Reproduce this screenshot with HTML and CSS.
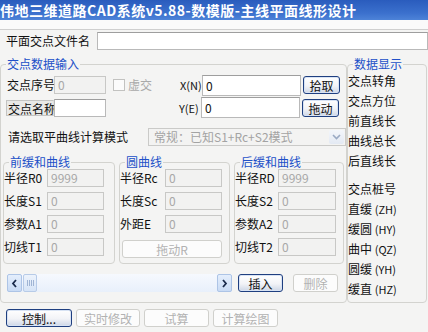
FILE: index.html
```html
<!DOCTYPE html>
<html lang="zh-CN">
<head>
    <meta charset="UTF-8">
    <meta name="viewport" content="width=device-width, initial-scale=1.0">
    <title>主线平面线形设计</title>
    <link rel="stylesheet" href="styles.css">
</head>
<body>
    <div class="titlebar">伟地三维道路CAD系统v5.88-数模版-主线平面线形设计</div>
    <div class="strip"></div>

    <div class="file-row">
        <span class="file-label">平面交点文件名</span>
        <div class="edit file-edit"></div>
    </div>

    <div class="panels">
        <fieldset class="group main">
            <legend>交点数据输入</legend>

            <div class="row row-a">
                <span class="lbl w47">交点序号</span>
                <div class="edit off w52">0</div>
                <span class="chk"></span>
                <span class="chk-text">虚交</span>
                <span class="lbl xy">X(N)</span>
                <div class="edit xy-edit">0</div>
                <button class="btn small">拾取</button>
            </div>

            <div class="row row-b">
                <span class="lbl w47 focus">交点名称</span>
                <div class="edit w52"></div>
                <span class="lbl xy ye">Y(E)</span>
                <div class="edit xy-edit">0</div>
                <button class="btn small">拖动</button>
            </div>

            <div class="row row-c">
                <span class="lbl mode-label">请选取平曲线计算模式</span>
                <div class="combo">
                    <span class="combo-text">常规：已知S1+Rc+S2模式</span>
                    <span class="combo-btn">
                        <svg width="9" height="6" viewBox="0 0 9 6"><polyline points="1,1 4.5,4.5 8,1" fill="none" stroke="#9aaac4" stroke-width="1.6"/></svg>
                    </span>
                </div>
            </div>

            <div class="subs">
                <fieldset class="group sub sub-front">
                    <legend>前缓和曲线</legend>
                    <div class="field"><span class="lbl">半径R0</span><div class="edit off">9999</div></div>
                    <div class="field"><span class="lbl">长度S1</span><div class="edit off">0</div></div>
                    <div class="field"><span class="lbl">参数A1</span><div class="edit off">0</div></div>
                    <div class="field"><span class="lbl">切线T1</span><div class="edit off">0</div></div>
                </fieldset>
                <fieldset class="group sub sub-circle">
                    <legend>圆曲线</legend>
                    <div class="field"><span class="lbl">半径Rc</span><div class="edit off">0</div></div>
                    <div class="field"><span class="lbl">长度Sc</span><div class="edit off">0</div></div>
                    <div class="field"><span class="lbl">外距E</span><div class="edit off">0</div></div>
                    <div class="field"><button class="btn off drag-r">拖动R</button></div>
                </fieldset>
                <fieldset class="group sub sub-back">
                    <legend>后缓和曲线</legend>
                    <div class="field"><span class="lbl">半径RD</span><div class="edit off">9999</div></div>
                    <div class="field"><span class="lbl">长度S2</span><div class="edit off">0</div></div>
                    <div class="field"><span class="lbl">参数A2</span><div class="edit off">0</div></div>
                    <div class="field"><span class="lbl">切线T2</span><div class="edit off">0</div></div>
                </fieldset>
            </div>

            <div class="row scroll-row">
                <div class="hscroll">
                    <span class="arrow">
                        <svg width="7" height="9" viewBox="0 0 7 9"><polyline points="5,1 2,4.5 5,8" fill="none" stroke="#1a2a4a" stroke-width="1.8"/></svg>
                    </span>
                    <span class="thumb"><i></i><i></i><i></i><i></i></span>
                    <span class="track"></span>
                    <span class="arrow">
                        <svg width="7" height="9" viewBox="0 0 7 9"><polyline points="2,1 5,4.5 2,8" fill="none" stroke="#1a2a4a" stroke-width="1.8"/></svg>
                    </span>
                </div>
                <button class="btn insert">插入</button>
                <button class="btn off delete">删除</button>
            </div>
        </fieldset>

        <fieldset class="group display">
            <legend>数据显示</legend>
            <div class="item">交点转角</div>
            <div class="item">交点方位</div>
            <div class="item">前直线长</div>
            <div class="item">曲线总长</div>
            <div class="item">后直线长</div>
            <div class="item gap">交点桩号</div>
            <div class="item">直缓 <span class="code">(ZH)</span></div>
            <div class="item">缓圆 <span class="code">(HY)</span></div>
            <div class="item">曲中 <span class="code">(QZ)</span></div>
            <div class="item">圆缓 <span class="code">(YH)</span></div>
            <div class="item">缓直 <span class="code">(HZ)</span></div>
        </fieldset>
    </div>

    <div class="actions">
        <button class="btn ctrl">控制...</button>
        <button class="btn off w64">实时修改</button>
        <button class="btn off w65">试算</button>
        <button class="btn off w65">计算绘图</button>
    </div>
</body>
</html>
```

FILE: styles.css
```css
* {
    box-sizing: border-box;
}
body {
    margin: 0;
    width: 428px;
    height: 332px;
    overflow: hidden;
    background: #f4f4f3;
    font-family: "Noto Sans CJK SC", sans-serif;
    font-size: 12px;
    line-height: 14px;
    color: #111;
}
.titlebar {
    height: 20px;
    background: linear-gradient(#2a5cbd, #3b70cd 65%, #4d83d8);
    color: #fff;
    font-weight: bold;
    font-size: 14px;
    line-height: 20px;
    letter-spacing: 0.5px;
    white-space: nowrap;
    overflow: hidden;
}
.strip {
    height: 10px;
    background: #fafafa;
    border-bottom: 1px solid #cfcfcf;
}
.file-row {
    display: flex;
    align-items: center;
    height: 17px;
    margin-top: 2px;
    padding-left: 6px;
}
.file-label {
    width: 91px;
}
.file-edit {
    flex: 1;
    height: 17px;
}
.panels {
    display: flex;
    margin-top: 8px;
}

/* group boxes */
fieldset.group {
    margin: 0;
    padding: 0;
    min-width: 0;
    border: 1px solid #d3d3cf;
    border-radius: 4px;
}
legend {
    margin-left: 5px;
    padding: 0 1px;
    color: #2150c8;
    line-height: 14px;
}
.main {
    flex-shrink: 0;
    margin-left: 5px;
    width: 347px;
    height: 246px;
}
.display {
    flex-shrink: 0;
    margin-left: 5px;
    width: 80px;
    height: 246px;
    padding: 1px 0 0 4px;
}

/* edits */
.edit {
    flex-shrink: 0;
    height: 18px;
    border: 1px solid #b9b9b9;
    border-top-color: #9e9e9e;
    background: #fff;
    padding-left: 3px;
    line-height: 16px;
    white-space: nowrap;
    overflow: hidden;
}
.edit.off {
    background: #f2f2f1;
    border-color: #c8c8c6;
    color: #a8a8a8;
}
.lbl {
    flex-shrink: 0;
    white-space: nowrap;
}
.w47 { width: 47px; }
.w52 { width: 52px; }
.w64 { width: 64px; }
.w65 { width: 65px; }

.row {
    display: flex;
    align-items: center;
}
.row-a {
    height: 20px;
    margin-top: 4px;
    padding-left: 6px;
}
.row-b {
    height: 21px;
    margin-top: 2px;
    padding-left: 6px;
}
.focus {
    margin-left: -1px;
    padding-left: 1px;
    width: 48px;
    height: 16px;
    line-height: 15px;
    background: #e9e9e7;
    border: 1px solid #c4c4c2;
    border-right-color: #e0e0de;
}
.chk {
    flex-shrink: 0;
    width: 12px;
    height: 12px;
    margin-left: 7px;
    border: 1px solid #c2c2c0;
    background: #fbfbfb;
}
.chk-text {
    flex-shrink: 0;
    margin-left: 3px;
    width: 52px;
    color: #a9a9a9;
}
.xy {
    width: 22px;
    font-size: 11px;
}
.ye {
    margin-left: 73px;
}
.xy-edit {
    width: 99px;
    height: 21px;
    line-height: 19px;
}
.row-c {
    height: 18px;
    margin-top: 10px;
    padding-left: 7px;
}
.mode-label {
    width: 140px;
}
.combo {
    display: flex;
    width: 198px;
    height: 18px;
    border: 1px solid #cacac8;
    background: #f3f3f2;
}
.combo-text {
    flex: 1;
    padding-left: 5px;
    line-height: 16px;
    color: #a3a3a3;
    white-space: nowrap;
}
.combo-btn {
    display: flex;
    align-items: center;
    justify-content: center;
    width: 15px;
    margin: 1px;
    background: linear-gradient(#f3f6fb, #e3e9f3);
    border-radius: 2px;
}

/* buttons */
.btn {
    flex-shrink: 0;
    height: 18px;
    padding: 0;
    font: inherit;
    line-height: 15px;
    color: #111;
    border: 1px solid #1f3f80;
    border-radius: 3px;
    background: linear-gradient(#ffffff, #f2f3f7 55%, #cdd6e6);
    box-shadow: inset 0 0 0 1px #d8e3f4;
}
.btn.off {
    border-color: #d0d0cc;
    background: #fcfcfc;
    box-shadow: none;
    color: #b2b2b2;
}
.small {
    width: 37px;
    margin-left: 2px;
}
.row-b .small {
    margin-top: 1px;
}

/* curve sub groups */
.subs {
    display: flex;
    gap: 4px;
    margin-top: 9px;
    padding-left: 2px;
}
.sub {
    flex-shrink: 0;
    height: 109px;
    padding-top: 1px;
}
.sub-front {
    width: 112px;
    padding-left: 6px;
}
.sub-circle {
    width: 111px;
    padding-left: 3px;
}
.sub-back {
    width: 110px;
    padding-left: 4px;
}
.sub legend {
    margin-left: 5px;
}
.field {
    display: flex;
    align-items: center;
    height: 18px;
    margin-bottom: 5px;
}
.field .lbl {
    width: 43px;
}
.sub-circle .field .lbl {
    width: 45px;
}
.field .edit {
    width: 57px;
}
.sub-back .field .edit {
    width: 58px;
}
.drag-r {
    width: 100px;
    margin: 4px 0 0 2px;
}

/* scroll bar + insert */
.scroll-row {
    height: 18px;
    margin-top: 10px;
    padding-left: 6px;
}
.hscroll {
    display: flex;
    width: 225px;
    height: 18px;
    background: linear-gradient(#f6f9fe, #e8f0fb);
}
.arrow {
    display: flex;
    align-items: center;
    justify-content: center;
    width: 15px;
    border: 1px solid #adc4e6;
    border-radius: 2px;
    background: linear-gradient(#e4eefc, #c9dbf4);
}
.thumb {
    display: flex;
    align-items: center;
    justify-content: center;
    gap: 1px;
    width: 14px;
    margin-left: 1px;
    border: 1px solid #b7cbe8;
    border-radius: 2px;
    background: linear-gradient(#edf3fc, #d6e4f7);
}
.thumb i {
    width: 1px;
    height: 6px;
    background: #9fb4d4;
}
.track {
    flex: 1;
}
.insert {
    width: 45px;
    margin-left: 6px;
}
.delete {
    width: 45px;
    margin-left: 10px;
}

/* data display */
.item {
    height: 20px;
    line-height: 20px;
    white-space: nowrap;
}
.item.gap {
    margin-top: 8px;
}
.code {
    font-size: 11px;
}

/* bottom buttons */
.actions {
    display: flex;
    gap: 4px;
    margin-top: 6px;
    padding-left: 6px;
}
.ctrl {
    width: 66px;
}
```
